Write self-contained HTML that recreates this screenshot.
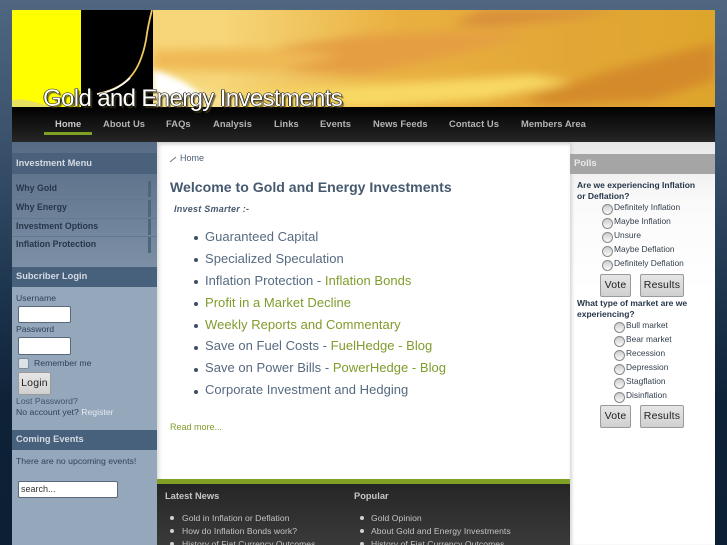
<!DOCTYPE html>
<html><head><meta charset="utf-8"><style>
html,body{margin:0;padding:0;width:727px;height:545px;overflow:hidden;font-family:"Liberation Sans",sans-serif}
body{background:linear-gradient(180deg,#506780 0,#4a627c 30px,#38506a 150px,#1c334c 300px,#0e2237 400px,#0c1f33 545px);position:relative}
.a{position:absolute;white-space:nowrap}
.nav{font-size:9.4px;font-weight:bold;color:#b4b4b4;top:118px;letter-spacing:.05px}
.h{font-size:9.3px;font-weight:bold;color:#d5dbe2}
.m{font-size:8.8px;font-weight:bold;color:#26364a;left:16px}
.t{font-size:8.7px;color:#2f4257}
.in{background:#fff;border:1px solid #5a6a7c;border-radius:2px;box-sizing:border-box}
.btn{background:linear-gradient(#e6e6e6,#d0d0d0);border:1px solid #9a9a9a;border-radius:2px;box-sizing:border-box;color:#222;font-size:10.5px;text-align:center;letter-spacing:.2px}
.li{font-size:13px;color:#566a80;left:205px;letter-spacing:.03px}
.li b{font-weight:normal;color:#7f9c2c}
.d{width:4px;height:4px;border-radius:50%;background:#3d4f64;left:194px}
.r{width:11px;height:11px;border-radius:50%;background:linear-gradient(#ccc,#fafafa);border:1px solid #8a8a8a;box-sizing:border-box}
.o{font-size:8.4px;color:#333f4c}
.q{font-size:8.5px;font-weight:bold;color:#26364a;left:577px}
.f{font-size:8.6px;color:#c4c4c4;letter-spacing:.05px}
.fd{width:4px;height:4px;border-radius:50%;background:#d0d0d0}
</style></head><body>
<div class="a" style="left:12px;top:10px;width:703px;height:97px;background:#e6a535;overflow:hidden">
<svg width="703" height="97" viewBox="0 0 703 97" style="display:block">
<defs><linearGradient id="g" x1="0" y1="0" x2="1" y2="0"><stop offset="0" stop-color="#f7d67a"/><stop offset=".3" stop-color="#f6d679"/><stop offset=".55" stop-color="#e9b040"/><stop offset=".8" stop-color="#e2a636"/><stop offset="1" stop-color="#dea52c"/></linearGradient>
<filter id="b"><feGaussianBlur stdDeviation="5"/></filter><filter id="c"><feGaussianBlur stdDeviation="3"/></filter></defs>
<rect width="703" height="97" fill="url(#g)"/>
<g filter="url(#b)">
<path d="M240 42L351 25 440 22 520 25 430 48 351 65 260 60Z" fill="#e59f42"/>
<path d="M141 40L240 38 330 45 260 62 141 60Z" fill="#efb955"/>
<path d="M470 0H610L560 8 480 17 440 15Z" fill="#d8903a"/>
<path d="M510 90L600 60 703 33V70L640 90 540 95Z" fill="#d48a2c"/>
<path d="M200 85L351 75 520 65 560 72 470 90 360 97H200Z" fill="#f8d964"/>
<path d="M141 62L175 75 240 97H141Z" fill="#f7e49a"/>
</g>
<path d="M141 60C160 66 175 72 190 86 170 90 150 86 141 80Z" fill="#fff" filter="url(#c)"/>
<rect x="0" width="69" height="97" fill="#ff0"/>
<rect x="69" width="72" height="97" fill="#000"/>
<path d="M0 90C15 88 25 93 40 97H0Z" fill="#e8e060" />
<path d="M85 84C115 78 128 62 134 30 136 15 138 8 140 0" fill="none" stroke="#f0c860" stroke-width="1.8"/>
<path d="M85 84C100 82 110 76 118 68" fill="none" stroke="#fff" stroke-width="1.6"/>
</svg>
</div>
<div class="a" style="left:12px;top:107px;width:703px;height:35px;background:linear-gradient(#000,#0c0c0c 10px,#262626)"></div>
<div class="a" style="left:43px;top:85px;font-size:24px;color:#fff;letter-spacing:-.63px;text-shadow:-.7px 0 0 #111,.7px 0 0 #111,0 -.7px 0 #111,0 .7px 0 #111,2px 2px 1px rgba(70,60,30,.75)">Gold and Energy Investments</div>
<div class="a nav" style="left:55px;color:#c9c9c9">Home</div>
<div class="a" style="left:44px;top:132px;width:48px;height:3px;background:#7fa024"></div>
<div class="a nav" style="left:103px">About Us</div>
<div class="a nav" style="left:166px">FAQs</div>
<div class="a nav" style="left:213px">Analysis</div>
<div class="a nav" style="left:274px">Links</div>
<div class="a nav" style="left:320px">Events</div>
<div class="a nav" style="left:373px">News Feeds</div>
<div class="a nav" style="left:449px">Contact Us</div>
<div class="a nav" style="left:521px">Members Area</div>

<!-- left -->
<div class="a" style="left:12px;top:142px;width:145px;height:403px;background:#95a7bb"></div>
<div class="a" style="left:12px;top:142px;width:145px;height:125px;background:linear-gradient(#566c84,#7c8fa5)"></div>
<div class="a" style="left:12px;top:153px;width:145px;height:21px;background:#4a617b"></div>
<div class="a h" style="left:16px;top:158px">Investment Menu</div>
<div class="a m" style="top:183px">Why Gold</div>
<div class="a m" style="top:202px">Why Energy</div>
<div class="a m" style="top:221px">Investment Options</div>
<div class="a m" style="top:239px">Inflation Protection</div>
<div class="a" style="left:12px;top:199px;width:145px;height:1px;background:#64788f"></div>
<div class="a" style="left:12px;top:218px;width:145px;height:1px;background:#64788f"></div>
<div class="a" style="left:12px;top:236px;width:145px;height:1px;background:#64788f"></div>
<div class="a" style="left:148px;top:181px;width:3px;height:16px;background:#4f657e"></div>
<div class="a" style="left:148px;top:200px;width:3px;height:17px;background:#4f657e"></div>
<div class="a" style="left:148px;top:219px;width:3px;height:16px;background:#4f657e"></div>
<div class="a" style="left:148px;top:237px;width:3px;height:16px;background:#4f657e"></div>
<div class="a" style="left:12px;top:267px;width:145px;height:20px;background:#47607c"></div>
<div class="a h" style="left:16px;top:271px">Subcriber Login</div>
<div class="a t" style="left:16px;top:293px">Username</div>
<div class="a in" style="left:18px;top:306px;width:53px;height:17px"></div>
<div class="a t" style="left:16px;top:324px">Password</div>
<div class="a in" style="left:18px;top:337px;width:53px;height:18px"></div>
<div class="a in" style="left:18px;top:358px;width:11px;height:11px;background:#dde2e8;border-color:#7d8c9c"></div>
<div class="a t" style="left:34px;top:358px">Remember me</div>
<div class="a btn" style="left:18px;top:372px;width:33px;height:23px;line-height:21px">Login</div>
<div class="a t" style="left:16px;top:396px;color:#3e536a">Lost Password?</div>
<div class="a t" style="left:16px;top:407px">No account yet? <span style="color:#e4eaf0">Register</span></div>
<div class="a" style="left:12px;top:430px;width:145px;height:20px;background:#47607c"></div>
<div class="a h" style="left:16px;top:434px">Coming Events</div>
<div class="a t" style="left:16px;top:456px">There are no upcoming events!</div>
<div class="a in" style="left:18px;top:481px;width:100px;height:17px;font-size:9px;line-height:15px;padding-left:2px;color:#333">search...</div>

<!-- center -->
<div class="a" style="left:157px;top:142px;width:413px;height:337px;background:#fff;box-shadow:inset 0 4px 4px -2px #ccc,inset 4px 0 4px -2px #ddd"></div>
<svg class="a" style="left:169px;top:155px" width="8" height="8"><path d="M1 7L7 2" stroke="#777" stroke-width="1"/></svg>
<div class="a" style="left:180px;top:153px;font-size:9px;color:#4c5f75">Home</div>
<div class="a" style="left:170px;top:179px;font-size:14.1px;font-weight:bold;color:#46596f">Welcome to Gold and Energy Investments</div>
<div class="a" style="left:174px;top:204px;font-size:9px;font-weight:bold;font-style:italic;color:#46596f;letter-spacing:.25px">Invest Smarter :-</div>
<div class="a d" style="top:236px"></div><div class="a li" style="top:229px">Guaranteed Capital</div>
<div class="a d" style="top:258px"></div><div class="a li" style="top:251px">Specialized Speculation</div>
<div class="a d" style="top:280px"></div><div class="a li" style="top:273px">Inflation Protection - <b>Inflation Bonds</b></div>
<div class="a d" style="top:302px"></div><div class="a li" style="top:295px"><b>Profit in a Market Decline</b></div>
<div class="a d" style="top:324px"></div><div class="a li" style="top:317px"><b>Weekly Reports and Commentary</b></div>
<div class="a d" style="top:346px"></div><div class="a li" style="top:338px">Save on Fuel Costs - <b>FuelHedge - Blog</b></div>
<div class="a d" style="top:368px"></div><div class="a li" style="top:360px">Save on Power Bills - <b>PowerHedge - Blog</b></div>
<div class="a d" style="top:390px"></div><div class="a li" style="top:382px">Corporate Investment and Hedging</div>
<div class="a" style="left:170px;top:422px;font-size:9px;color:#7f9c2c">Read more...</div>

<!-- footer -->
<div class="a" style="left:157px;top:479px;width:413px;height:5px;background:#7fa024"></div>
<div class="a" style="left:157px;top:484px;width:413px;height:61px;background:linear-gradient(#262626,#3a3a3a)"></div>
<div class="a" style="left:165px;top:491px;font-size:9.3px;font-weight:bold;color:#c6c6c6">Latest News</div>
<div class="a" style="left:354px;top:491px;font-size:9.3px;font-weight:bold;color:#c6c6c6">Popular</div>
<div class="a fd" style="left:170px;top:516px"></div><div class="a f" style="left:182px;top:513px">Gold in Inflation or Deflation</div>
<div class="a fd" style="left:170px;top:529px"></div><div class="a f" style="left:182px;top:526px">How do Inflation Bonds work?</div>
<div class="a fd" style="left:170px;top:542px"></div><div class="a f" style="left:182px;top:539px">History of Fiat Currency Outcomes</div>
<div class="a fd" style="left:360px;top:516px"></div><div class="a f" style="left:371px;top:513px">Gold Opinion</div>
<div class="a fd" style="left:360px;top:529px"></div><div class="a f" style="left:371px;top:526px">About Gold and Energy Investments</div>
<div class="a fd" style="left:360px;top:542px"></div><div class="a f" style="left:371px;top:539px">History of Fiat Currency Outcomes</div>

<!-- right -->
<div class="a" style="left:570px;top:142px;width:145px;height:403px;background:linear-gradient(#e8e8e8,#fafafa 60px,#fff 150px);box-shadow:inset 3px 0 3px -1px #d6d6d6"></div>
<div class="a" style="left:570px;top:154px;width:145px;height:20px;background:#a5a5a5"></div>
<div class="a" style="left:574px;top:158px;font-size:9.5px;font-weight:bold;color:#e8e8e8">Polls</div>
<div class="a q" style="top:180px">Are we experiencing Inflation</div>
<div class="a q" style="top:191px">or Deflation?</div>
<div class="a r" style="left:602px;top:204px"></div><div class="a o" style="left:614px;top:202px">Definitely Inflation</div>
<div class="a r" style="left:602px;top:218px"></div><div class="a o" style="left:614px;top:216px">Maybe Inflation</div>
<div class="a r" style="left:602px;top:232px"></div><div class="a o" style="left:614px;top:230px">Unsure</div>
<div class="a r" style="left:602px;top:246px"></div><div class="a o" style="left:614px;top:244px">Maybe Deflation</div>
<div class="a r" style="left:602px;top:260px"></div><div class="a o" style="left:614px;top:258px">Definitely Deflation</div>
<div class="a btn" style="left:600px;top:274px;width:31px;height:23px;line-height:21px">Vote</div>
<div class="a btn" style="left:640px;top:274px;width:44px;height:23px;line-height:21px">Results</div>
<div class="a q" style="top:298px">What type of market are we</div>
<div class="a q" style="top:309px">experiencing?</div>
<div class="a r" style="left:614px;top:322px"></div><div class="a o" style="left:626px;top:320px">Bull market</div>
<div class="a r" style="left:614px;top:336px"></div><div class="a o" style="left:626px;top:334px">Bear market</div>
<div class="a r" style="left:614px;top:350px"></div><div class="a o" style="left:626px;top:348px">Recession</div>
<div class="a r" style="left:614px;top:364px"></div><div class="a o" style="left:626px;top:362px">Depression</div>
<div class="a r" style="left:614px;top:378px"></div><div class="a o" style="left:626px;top:376px">Stagflation</div>
<div class="a r" style="left:614px;top:392px"></div><div class="a o" style="left:626px;top:390px">Disinflation</div>
<div class="a btn" style="left:600px;top:405px;width:31px;height:23px;line-height:21px">Vote</div>
<div class="a btn" style="left:640px;top:405px;width:44px;height:23px;line-height:21px">Results</div>
</body></html>
